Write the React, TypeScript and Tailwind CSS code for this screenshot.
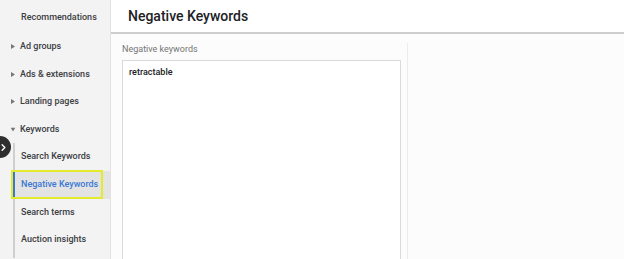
import { ChevronRight } from "lucide-react";

const topItems = [
  { label: "Ad groups" },
  { label: "Ads & extensions" },
  { label: "Landing pages" },
];

const subItems = ["Search Keywords", "Negative Keywords", "Search terms", "Auction insights"];

function Caret({ open }: { open?: boolean }) {
  return (
    <span className="w-[9px] flex justify-start text-[#777]">
      <svg width="4" height="5" viewBox="0 0 4 5" className={open ? "rotate-90" : ""}>
        <path d="M0 0 L4 2.5 L0 5 Z" fill="currentColor" />
      </svg>
    </span>
  );
}

export default function App() {
  return (
    <div
      className="w-[624px] h-[259px] flex overflow-hidden bg-white text-[#3c4043]"
      style={{ fontFamily: "Roboto, Arial, sans-serif" }}
    >
      {/* Sidebar */}
      <div className="relative w-[111px] shrink-0 bg-[#f3f3f3] border-r border-[#e2e2e2] text-[9px] font-medium">
        <div className="h-[33px] flex items-center pl-[21px] pt-[3px]">Recommendations</div>
        {topItems.map((it) => (
          <div key={it.label} className="h-[27.6px] flex items-center pl-[11px]">
            <Caret />
            <span>{it.label}</span>
          </div>
        ))}
        <div className="h-[27.6px] flex items-center pl-[11px]">
          <Caret open />
          <span>Keywords</span>
        </div>
        <div className="ml-[13px] border-l-2 border-[#cfcfcf] pb-[4px]">
          {subItems.map((s) => {
            const active = s === "Negative Keywords";
            return (
              <div
                key={s}
                className={`relative h-[27.6px] flex items-center pl-[6px] ${
                  active ? "bg-[#e3e3e3] text-[#3a78d6] -ml-[2px] border-l-2 border-[#3a78d6]" : ""
                }`}
              >
                {s}
                {active && (
                  <span className="absolute left-[-4px] top-[-1px] w-[92px] h-[29px] border-2 border-[#e4ea2c]" />
                )}
              </div>
            );
          })}
        </div>
        <div className="absolute left-[-11px] top-[136px] w-[22px] h-[22px] rounded-full bg-[#2e2e2e] flex items-center justify-end pr-[2px]">
          <ChevronRight size={11} strokeWidth={3} className="text-white" />
        </div>
      </div>

      {/* Main */}
      <div className="flex-1 flex flex-col">
        <div className="h-[34px] shrink-0 flex items-center pl-[17px] border-b-2 border-[#cdcdcd] shadow-[0_1px_2px_rgba(0,0,0,0.06)]">
          <h1 className="text-[14px] font-medium text-[#202124]">Negative Keywords</h1>
        </div>
        <div className="flex-1 bg-[#fcfcfc] pl-[11px] pt-[9px]">
          <div className="w-[286px] h-full border-r border-[#ececec]">
            <div className="text-[9px] text-[#757575] mb-[4px] leading-[13px]">Negative keywords</div>
            <div className="w-[279px] h-[220px] bg-white border border-[#dadada] px-[6px] pt-[5px] text-[9px] font-medium text-[#202124]">
              retractable
            </div>
          </div>
        </div>
      </div>
    </div>
  );
}
